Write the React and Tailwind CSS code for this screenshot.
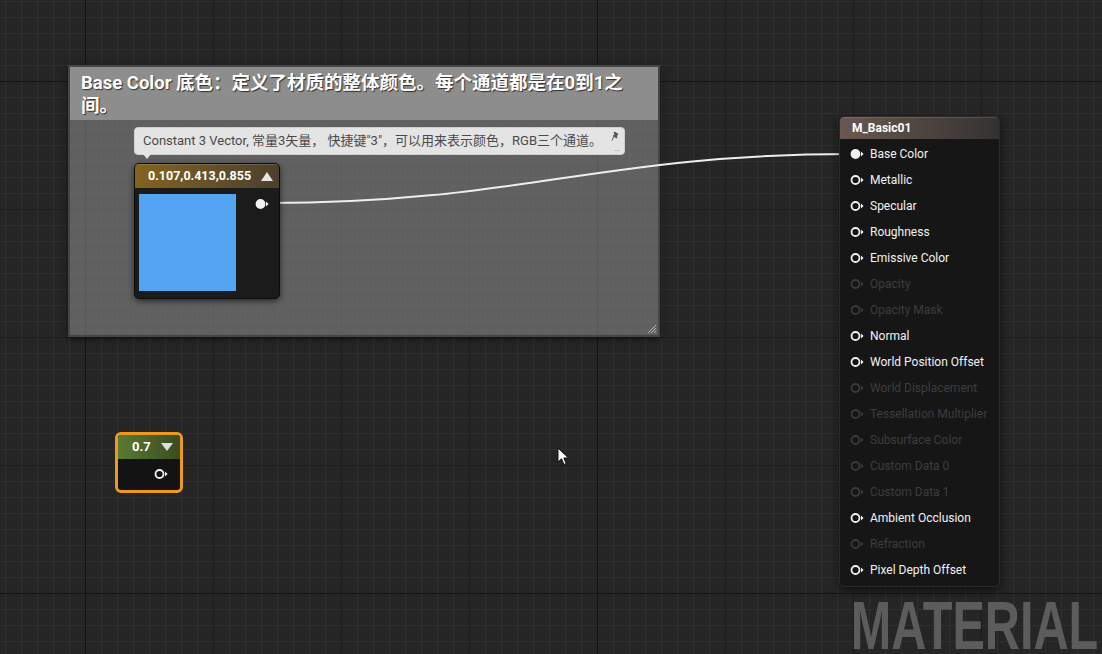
import React from "react";

const pins = [
  { label: "Base Color", on: true, linked: true },
  { label: "Metallic", on: true },
  { label: "Specular", on: true },
  { label: "Roughness", on: true },
  { label: "Emissive Color", on: true },
  { label: "Opacity" },
  { label: "Opacity Mask" },
  { label: "Normal", on: true },
  { label: "World Position Offset", on: true },
  { label: "World Displacement" },
  { label: "Tessellation Multiplier" },
  { label: "Subsurface Color" },
  { label: "Custom Data 0" },
  { label: "Custom Data 1" },
  { label: "Ambient Occlusion", on: true },
  { label: "Refraction" },
  { label: "Pixel Depth Offset", on: true },
];

function Pin({ filled, color = "#f2f2f2" }) {
  return (
    <svg width="15" height="12" viewBox="0 0 15 12" className="shrink-0">
      <circle cx="5.5" cy="6" r="4" fill={filled ? color : "none"} stroke={color} strokeWidth="1.8" />
      <polygon points="11,3.6 13.6,6 11,8.4" fill={color} />
    </svg>
  );
}

function Cursor() {
  return (
    <svg width="14" height="20" viewBox="0 0 14 20">
      <path d="M1 1 L1 15 L4.5 11.8 L7 17.5 L9.2 16.5 L6.8 11 L11.5 11 Z" fill="#fff" stroke="#111" strokeWidth="1" strokeLinejoin="round" />
    </svg>
  );
}

export default function App() {
  return (
    <div
      className="relative w-[1102px] h-[654px] overflow-hidden bg-[#252525] [background-image:linear-gradient(to_right,#131313_1px,transparent_1px),linear-gradient(to_bottom,#131313_1px,transparent_1px),linear-gradient(to_right,#1d1d1d_1px,transparent_1px),linear-gradient(to_bottom,#1d1d1d_1px,transparent_1px),linear-gradient(to_right,#2f2f2f_1px,transparent_1px),linear-gradient(to_bottom,#2f2f2f_1px,transparent_1px)] [background-size:512px_512px,512px_512px,128px_128px,128px_128px,16px_16px,16px_16px] [background-position:85px_81px,85px_81px,85px_81px,85px_81px,5px_1px,5px_1px]"
      style={{ fontFamily: "Roboto, 'Liberation Sans', 'Noto Sans CJK SC', sans-serif" }}
    >
      {/* comment box */}
      <div className="absolute left-[68px] top-[65px] w-[592px] h-[272px] flex flex-col border-2 border-[#454545] shadow-[0_2px_6px_rgba(0,0,0,0.5)]">
        <div className="bg-[#8d8d8d] pl-[11px] pr-[14px] pt-[5px] pb-[2px] h-[53px] text-[18.5px] leading-[23px] font-bold text-white [text-shadow:1px_1px_1px_rgba(0,0,0,0.65)]">
          Base Color 底色：定义了材质的整体颜色。每个通道都是在0到1之间。
        </div>
        <div className="relative flex-1 bg-[rgba(140,140,140,0.57)]">
          <svg width="12" height="12" viewBox="0 0 12 12" className="absolute right-[1px] bottom-[1px]">
            <path d="M11 3 L3 11 M11 6 L6 11 M11 9 L9 11" stroke="#b5b5b5" strokeWidth="1" />
          </svg>
        </div>
      </div>

      {/* wire */}
      <svg width="1102" height="654" className="absolute left-0 top-0 pointer-events-none">
        <path d="M268 203 C 520 203, 600 154, 852 154" fill="none" stroke="#eeeeee" strokeWidth="2" />
      </svg>

      {/* tooltip */}
      <div className="absolute left-[134px] top-[127px] w-[491px] h-[28px] rounded-[4px] bg-[#e4e4e4] border border-[#cfcfcf] flex items-center pl-[8px] text-[13px] text-[#4a4a4a] whitespace-nowrap">
        Constant 3 Vector, 常量3矢量， 快捷键"3"，可以用来表示颜色，RGB三个通道。
        <svg width="9" height="11" viewBox="0 0 9 11" className="absolute right-[4px] top-[3px]">
          <path d="M3 1 L7 3 L5.5 5 L6 7 L2 5 L4 4 Z M2.5 6 L1 9.5" fill="#555" stroke="#555" strokeWidth="1" />
        </svg>
        <span className="absolute right-[4px] bottom-[1px] text-[7px] leading-none text-[#777]">...</span>
        <div className="absolute left-[8px] -bottom-[5px] w-0 h-0 border-l-[4px] border-r-[4px] border-t-[5px] border-l-transparent border-r-transparent border-t-[#e4e4e4]" />
      </div>

      {/* constant 3 vector node */}
      <div className="absolute left-[134px] top-[163px] w-[146px] h-[136px] rounded-[5px] border border-[#0b0b0b] bg-[#1b1b1b] overflow-hidden flex flex-col shadow-[0_2px_6px_rgba(0,0,0,0.6)]">
        <div className="h-[24px] bg-gradient-to-r from-[#83641e] to-[#4b402d] flex items-center justify-between pl-[13px] pr-[6px] shadow-[inset_0_1px_0_rgba(255,255,255,0.15)]">
          <span className="text-[12.5px] font-bold text-white">0.107,0.413,0.855</span>
          <span className="w-0 h-0 border-l-[6px] border-r-[6px] border-b-[9px] border-l-transparent border-r-transparent border-b-[#e6e6e6]" />
        </div>
        <div className="flex flex-1 pl-[4px] pt-[6px] gap-[19px]">
          <div className="w-[97px] h-[97px] bg-[#53a5f3]" />
          <div className="pt-[4px]">
            <Pin filled />
          </div>
        </div>
      </div>

      {/* scalar node 0.7 */}
      <div className="absolute left-[115px] top-[432px] w-[68px] h-[61px] rounded-[6px] border-[3px] border-[#ec9a1c] bg-[#131313] overflow-hidden flex flex-col">
        <div className="h-[24px] bg-gradient-to-r from-[#5b7a31] to-[#3a4c22] flex items-center justify-between pl-[14px] pr-[7px]">
          <span className="text-[13px] font-bold text-white">0.7</span>
          <span className="w-0 h-0 border-l-[6px] border-r-[6px] border-t-[8px] border-l-transparent border-r-transparent border-t-[#e0e0e0]" />
        </div>
        <div className="flex-1 flex items-center justify-end pr-[11px] pb-[2px]">
          <Pin />
        </div>
      </div>

      {/* material result node */}
      <div className="absolute left-[839px] top-[116px] w-[161px] h-[471px] rounded-[5px] border border-[#2b2b2b] bg-[#161616] overflow-hidden flex flex-col shadow-[0_3px_8px_rgba(0,0,0,0.6)]">
        <div className="h-[22px] bg-gradient-to-r from-[#6a5850] via-[#4f4641] to-[#343231] flex items-center pl-[12px] shadow-[inset_0_1px_0_rgba(255,255,255,0.12)]">
          <span className="text-[12px] font-bold text-white">M_Basic01</span>
        </div>
        <div className="flex flex-col pt-[2px]">
          {pins.map((p) => (
            <div key={p.label} className="h-[26px] flex items-center pl-[10px] gap-[5px]">
              <Pin filled={p.linked} color={p.on ? "#f0f0f0" : "#3a3a3a"} />
              <span className={p.on ? "text-[12px] text-[#f2f2f2]" : "text-[12px] text-[#3d3d3d]"}>{p.label}</span>
            </div>
          ))}
        </div>
      </div>

      {/* watermark */}
      <div className="absolute right-[4px] top-[597px] origin-right scale-x-[0.715] text-[68px] leading-[56px] font-bold text-[#5c5c5c] whitespace-nowrap" style={{ fontFamily: "'Liberation Sans', Arial, sans-serif" }}>
        MATERIAL
      </div>

      {/* cursor */}
      <div className="absolute left-[557px] top-[447px]">
        <Cursor />
      </div>
    </div>
  );
}
